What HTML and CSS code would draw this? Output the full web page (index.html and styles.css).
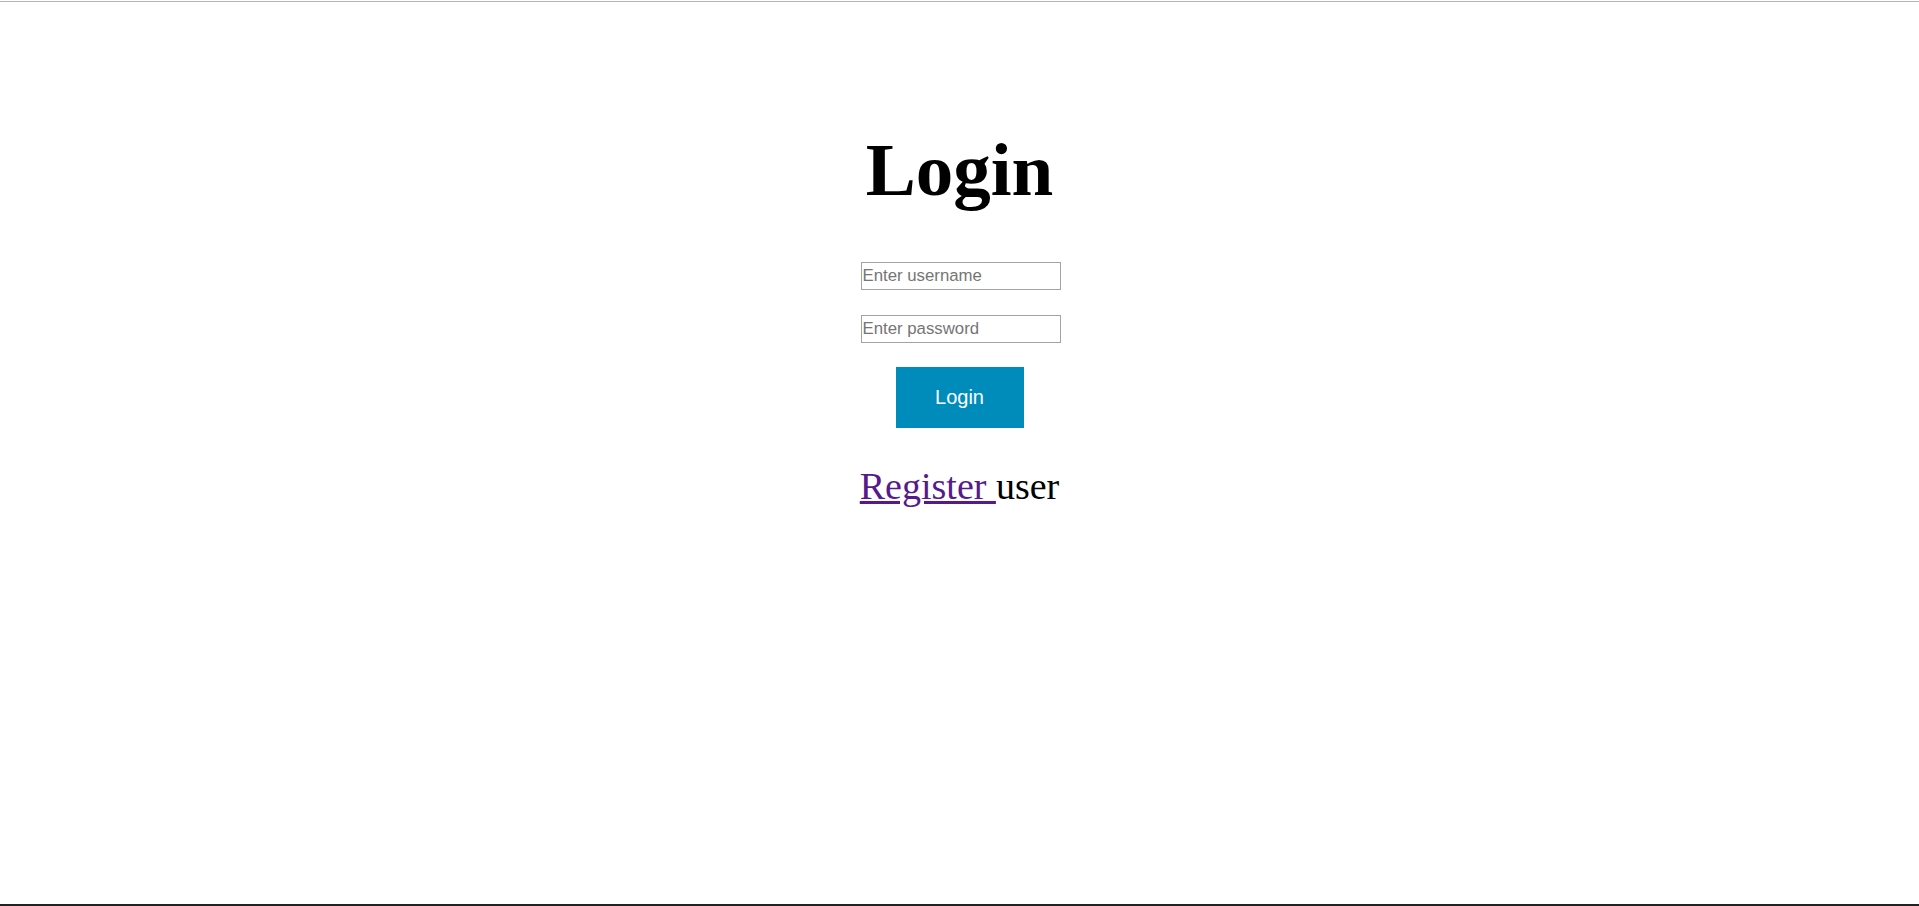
FILE: index.html
```html
<!DOCTYPE html>
<html lang="en">
<head>
<meta charset="utf-8">
<title>Login</title>
<link rel="stylesheet" href="styles.css">
</head>
<body>
<div class="page">
  <div class="topline"></div>
  <main class="content">
    <h1 class="title">Login</h1>
    <form class="login-form" onsubmit="return false;">
      <input class="field" type="text" placeholder="Enter username">
      <input class="field field-pass" type="password" placeholder="Enter password">
      <button class="btn" type="submit">Login</button>
    </form>
    <p class="register"><a class="register-link" href="#">Register </a>user</p>
  </main>
  <div class="bottomline"></div>
</div>
</body>
</html>
```

FILE: styles.css
```css
html, body {
  margin: 0;
  padding: 0;
  background: #ffffff;
}

.page {
  height: 906px;
  display: flex;
  flex-direction: column;
  overflow: hidden;
}

.topline {
  margin-top: 1px;
  height: 1px;
  background: #b5b5b5;
  flex: none;
}

.content {
  flex: 1;
  display: flex;
  flex-direction: column;
  align-items: center;
  text-align: center;
}

.title {
  margin: 126px 0 0 0;
  font-family: "Liberation Serif", "Times New Roman", serif;
  font-weight: bold;
  font-size: 75px;
  line-height: 83px;
  color: #000000;
}

.login-form {
  margin-top: 51px;
  display: flex;
  flex-direction: column;
  align-items: center;
}

.field {
  box-sizing: border-box;
  width: 200px;
  height: 28px;
  margin: 0 0 0 2px;
  padding: 0 1px;
  border: 1px solid #a3a3a3;
  border-radius: 0;
  font-family: "Liberation Sans", Arial, sans-serif;
  font-size: 16.8px;
  color: #000;
  background: #fff;
  outline: none;
}

.field::placeholder {
  color: #757575;
  opacity: 1;
}

.field-pass {
  margin-top: 25px;
}

.btn {
  margin-top: 24px;
  box-sizing: border-box;
  width: 128px;
  height: 61px;
  padding: 0 0 1px 0;
  border: none;
  background: #008cba;
  color: #ffffff;
  font-family: "Liberation Sans", Arial, sans-serif;
  font-size: 20px;
  line-height: 23px;
  cursor: pointer;
}

.register {
  margin: 37px 0 0 0;
  font-family: "Liberation Serif", "Times New Roman", serif;
  font-size: 38px;
  line-height: 42px;
  color: #000000;
}

.register-link {
  color: #551a8b;
  text-decoration: underline;
}

.bottomline {
  flex: none;
  height: 2px;
  background: #222222;
}
```
